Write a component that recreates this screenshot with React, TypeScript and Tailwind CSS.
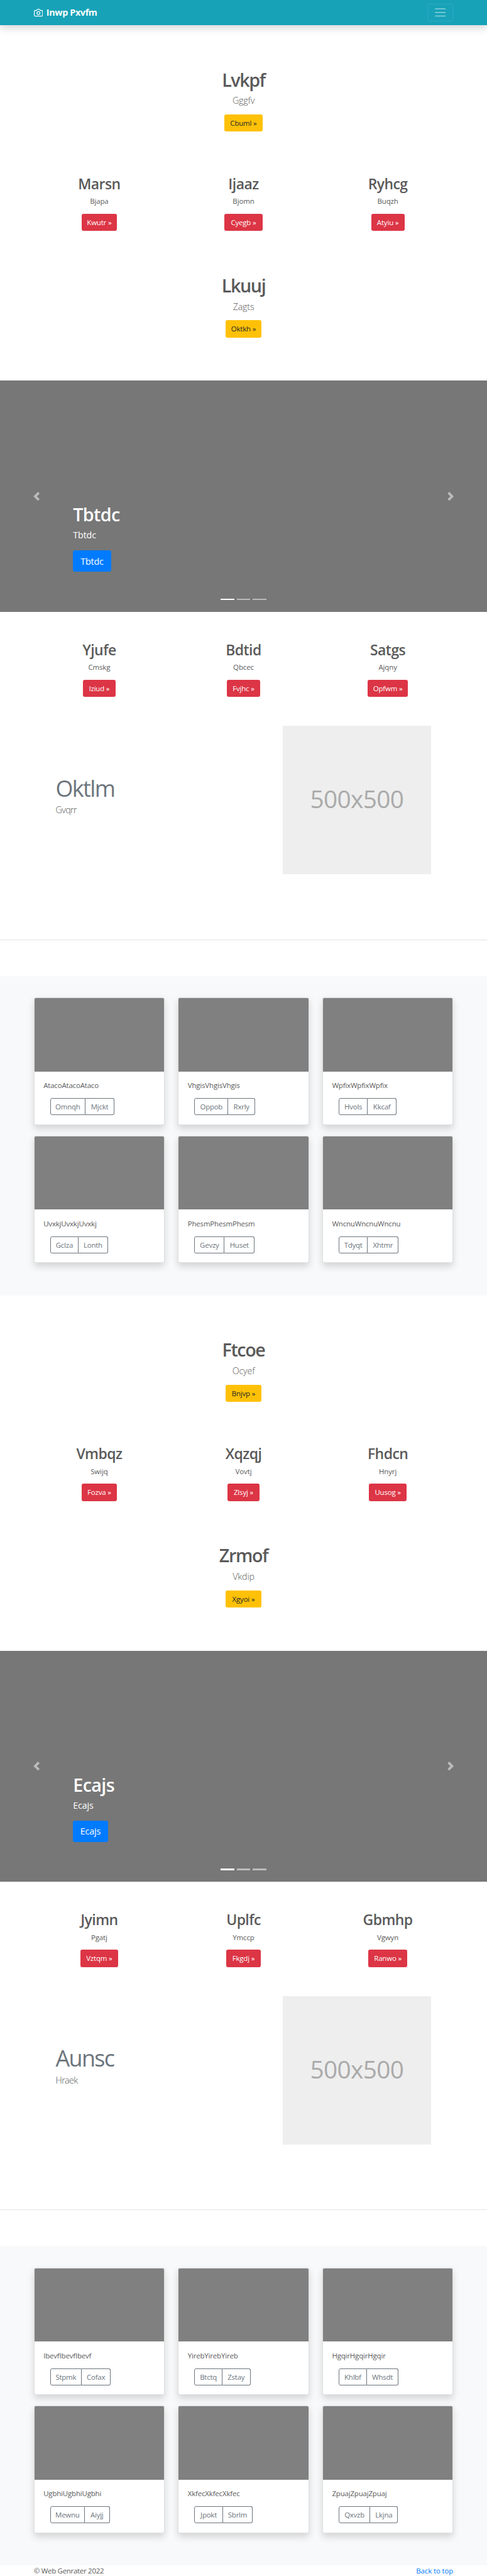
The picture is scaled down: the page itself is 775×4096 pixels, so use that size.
type Action = { label: string; width: string };
type HeroData = { title: string; text: string; action: Action };
type CardData = { text: string; left: Action; right: Action };
type HalfData = {
  hero: HeroData;
  features: HeroData[];
  secondHero: HeroData;
  slide: { title: string; width: string };
  moreFeatures: HeroData[];
  featurette: { title: string; text: string };
  cards: CardData[];
};

const halves: HalfData[] = [
  {
    hero: { title: "Lvkpf", text: "Gggfv", action: { label: "Cbuml »", width: "w-[60.3px]" } },
    features: [
      { title: "Marsn", text: "Bjapa", action: { label: "Kwutr »", width: "w-[55.8px]" } },
      { title: "Ijaaz", text: "Bjomn", action: { label: "Cyegb »", width: "w-[60.3px]" } },
      { title: "Ryhcg", text: "Buqzh", action: { label: "Atyiu »", width: "w-[52.9px]" } },
    ],
    secondHero: { title: "Lkuuj", text: "Zagts", action: { label: "Oktkh »", width: "w-[57.4px]" } },
    slide: { title: "Tbtdc", width: "w-[60.3px]" },
    moreFeatures: [
      { title: "Yjufe", text: "Cmskg", action: { label: "Iziud »", width: "w-[51.9px]" } },
      { title: "Bdtid", text: "Qbcec", action: { label: "Fvjhc »", width: "w-[53.4px]" } },
      { title: "Satgs", text: "Ajqny", action: { label: "Opfwm »", width: "w-[64.7px]" } },
    ],
    featurette: { title: "Oktlm", text: "Gvqrr" },
    cards: [
      { text: "AtacoAtacoAtaco", left: { label: "Omnqh", width: "w-[56.3px]" }, right: { label: "Mjckt", width: "w-[46.2px]" } },
      { text: "VhgisVhgisVhgis", left: { label: "Oppob", width: "w-[54.1px]" }, right: { label: "Rxrly", width: "w-[42.7px]" } },
      { text: "WpfixWpfixWpfix", left: { label: "Hvols", width: "w-[46.5px]" }, right: { label: "Kkcaf", width: "w-[45.5px]" } },
      { text: "UvxkjUvxkjUvxkj", left: { label: "Gclza", width: "w-[45.5px]" }, right: { label: "Lonth", width: "w-[46.7px]" } },
      { text: "PhesmPhesmPhesm", left: { label: "Gevzy", width: "w-[48.2px]" }, right: { label: "Huset", width: "w-[47.7px]" } },
      { text: "WncnuWncnuWncnu", left: { label: "Tdyqt", width: "w-[46.5px]" }, right: { label: "Xhtmr", width: "w-[48.9px]" } },
    ],
  },
  {
    hero: { title: "Ftcoe", text: "Ocyef", action: { label: "Bnjvp »", width: "w-[56.3px]" } },
    features: [
      { title: "Vmbqz", text: "Swijq", action: { label: "Fozva »", width: "w-[55.8px]" } },
      { title: "Xqzqj", text: "Vovtj", action: { label: "Zlsyj »", width: "w-[50.4px]" } },
      { title: "Fhdcn", text: "Hnyrj", action: { label: "Uusog »", width: "w-[60.3px]" } },
    ],
    secondHero: { title: "Zrmof", text: "Vkdip", action: { label: "Xgyoi »", width: "w-[56.3px]" } },
    slide: { title: "Ecajs", width: "w-[55.4px]" },
    moreFeatures: [
      { title: "Jyimn", text: "Pgatj", action: { label: "Vztqm »", width: "w-[60.3px]" } },
      { title: "Uplfc", text: "Ymccp", action: { label: "Fkgdj »", width: "w-[55.4px]" } },
      { title: "Gbmhp", text: "Vgwyn", action: { label: "Ranwo »", width: "w-[61.8px]" } },
    ],
    featurette: { title: "Aunsc", text: "Hraek" },
    cards: [
      { text: "IbevfIbevfIbevf", left: { label: "Stpmk", width: "w-[50.4px]" }, right: { label: "Cofax", width: "w-[46.2px]" } },
      { text: "YirebYirebYireb", left: { label: "Btctq", width: "w-[44.7px]" }, right: { label: "Zstay", width: "w-[44.7px]" } },
      { text: "HgqirHgqirHgqir", left: { label: "Khlbf", width: "w-[45px]" }, right: { label: "Whsdt", width: "w-[50.4px]" } },
      { text: "UgbhiUgbhiUgbhi", left: { label: "Mewnu", width: "w-[55.4px]" }, right: { label: "Aiyjj", width: "w-[39.5px]" } },
      { text: "XkfecXkfecXkfec", left: { label: "Jpokt", width: "w-[45.5px]" }, right: { label: "Sbrlm", width: "w-[47.4px]" } },
      { text: "ZpuajZpuajZpuaj", left: { label: "Qxvzb", width: "w-[50.4px]" }, right: { label: "Lkjna", width: "w-[44px]" } },
    ],
  },
];

function Navbar() {
  return (
    <header className="relative z-10 flex h-[40.2px] items-center justify-between bg-[#17a2b8] px-[53.8px] shadow-[0_5.7px_11.5px_rgba(0,0,0,0.15)]">
      <a className="flex items-center text-white">
        <svg
          className="mr-[5.7px] size-[14.35px]"
          viewBox="0 0 24 24"
          fill="none"
          stroke="currentColor"
          strokeWidth="2"
          strokeLinecap="round"
          strokeLinejoin="round"
        >
          <path d="M23 19a2 2 0 0 1-2 2H3a2 2 0 0 1-2-2V8a2 2 0 0 1 2-2h4l2-3h6l2 3h4a2 2 0 0 1 2 2z" />
          <circle cx="12" cy="13" r="4" />
        </svg>
        <strong className="text-[14.35px] leading-[21.5px] font-bold tracking-[-0.025em]">Inwp Pxvfm</strong>
      </a>
      <button className="flex h-[28.7px] w-[40.2px] items-center justify-center rounded-[2.9px] border border-white/10">
        <svg className="size-[21.5px] shrink-0" viewBox="0 0 30 30" fill="none" stroke="rgba(255,255,255,0.5)" strokeWidth="2" strokeLinecap="round">
          <path d="M4 7h22M4 15h22M4 23h22" />
        </svg>
      </button>
    </header>
  );
}

function Hero({ data }: { data: HeroData }) {
  return (
    <section className="flex flex-col items-center">
      <h1 className="pt-[0.6px] text-[28.7px] leading-[34.4px] font-semibold tracking-[-0.048em]">{data.title}</h1>
      <p className="mt-[5.4px] text-[14.35px] leading-[21.5px] font-light tracking-[-0.015em]">{data.text}</p>
      <a
        className={`mt-[11.2px] flex h-[27.3px] items-center justify-center rounded-[2.9px] bg-[#ffc107] text-[11.48px] tracking-[-0.015em] text-[#212529] ${data.action.width}`}
      >
        {data.action.label}
      </a>
    </section>
  );
}

function Features({ items }: { items: HeroData[] }) {
  return (
    <section className="grid grid-cols-3 px-[43.1px]">
      {items.map((item) => (
        <div key={item.title} className="flex flex-col items-center">
          <h2 className="pt-[0.6px] text-[22.96px] leading-[27.5px] font-semibold tracking-[-0.024em]">{item.title}</h2>
          <p className="mt-[5.1px] text-[11.48px] leading-[17.2px] tracking-[-0.01em]">{item.text}</p>
          <a
            className={`mt-[11.5px] flex h-[27.3px] items-center justify-center rounded-[2.9px] bg-[#dc3545] text-[11.48px] tracking-[-0.015em] text-white ${item.action.width}`}
          >
            {item.action.label}
          </a>
        </div>
      ))}
    </section>
  );
}

function Chevron({ path }: { path: string }) {
  return (
    <svg className="size-[14.35px]" viewBox="0 0 8 8" fill="#fff">
      <path d={path} />
    </svg>
  );
}

function Carousel({ slide }: { slide: { title: string; width: string } }) {
  return (
    <section className="relative h-[367.3px] bg-[#777] pt-[196.1px] pl-[116.3px] text-white">
      <h1 className="text-[28.7px] leading-[34.4px] font-semibold tracking-[-0.022em]">{slide.title}</h1>
      <p className="mt-[4.6px] text-[14.35px] leading-[21.5px] tracking-[-0.012em]">{slide.title}</p>
      <a
        className={`mt-[13.1px] flex h-[34.4px] items-center justify-center rounded-[3.4px] bg-[#007bff] text-[14.35px] tracking-[-0.012em] ${slide.width}`}
      >
        {slide.title}
      </a>
      <button className="absolute inset-y-0 left-0 flex w-[15%] items-center justify-center opacity-50">
        <Chevron path="M5.25 0l-4 4 4 4 1.5-1.5L4.25 4l2.5-2.5L5.25 0z" />
      </button>
      <button className="absolute inset-y-0 right-0 flex w-[15%] items-center justify-center opacity-50">
        <Chevron path="M2.75 0l-1.5 1.5L3.75 4l-2.5 2.5L2.75 8l4-4-4-4z" />
      </button>
      <div className="absolute inset-x-0 bottom-[18.7px] flex justify-center gap-[4.2px]">
        <span className="h-[2.1px] w-[21.6px] bg-white" />
        <span className="h-[2.1px] w-[21.6px] bg-white/50" />
        <span className="h-[2.1px] w-[21.6px] bg-white/50" />
      </div>
    </section>
  );
}

function Featurette({ data }: { data: { title: string; text: string } }) {
  return (
    <section className="flex justify-between pr-[89px] pl-[88.5px]">
      <div className="pt-[81.7px]">
        <h2 className="text-[35.9px] leading-[35.9px] tracking-[-0.045em] text-[#6c757d]">{data.title}</h2>
        <p className="mt-[5.7px] text-[14.35px] leading-[21.5px] font-light tracking-[-0.045em]">{data.text}</p>
      </div>
      <div className="flex size-[236.3px] items-center justify-center bg-[#eee] pb-[4px] text-[38.75px] tracking-[-0.017em] text-[#aaa]">
        500x500
      </div>
    </section>
  );
}

function Card({ card }: { card: CardData }) {
  const button = "flex h-[27.3px] items-center justify-center border-[#6c757d] text-[11.48px] tracking-[-0.02em] text-[#6c757d]";
  return (
    <div className="h-[202.3px] rounded-[2.9px] border border-black/[0.125] bg-white bg-clip-border shadow-[0_5.7px_11.5px_rgba(0,0,0,0.15)]">
      <div className="h-[116.2px] rounded-t-[2px] bg-[#808080]" />
      <div className="px-[14.35px] pt-[13.9px]">
        <p className="text-[11.48px] leading-[17.2px] tracking-[-0.015em]">{card.text}</p>
        <div className="mt-[11.5px] ml-[10.5px] flex">
          <button className={`rounded-l-[2.9px] border ${button} ${card.left.width}`}>{card.left.label}</button>
          <button className={`rounded-r-[2.9px] border border-l-0 ${button} ${card.right.width}`}>{card.right.label}</button>
        </div>
      </div>
    </div>
  );
}

function Half({ data }: { data: HalfData }) {
  return (
    <div className="h-[2019.5px]">
      <div className="h-[1511.6px] pt-[68.9px]">
        <Hero data={data.hero} />
        <div className="mt-[68.6px]">
          <Features items={data.features} />
        </div>
        <div className="mt-[68.9px]">
          <Hero data={data.secondHero} />
        </div>
        <div className="mt-[68.9px]">
          <Carousel slide={data.slide} />
        </div>
        <div className="mt-[46.3px]">
          <Features items={data.moreFeatures} />
        </div>
        <div className="mt-[45.9px]">
          <Featurette data={data.featurette} />
        </div>
        <hr className="mt-[103.2px] border-t border-black/10" />
      </div>
      <div className="h-[507.9px] bg-[#f8f9fa] px-[53.8px] pt-[34.6px]">
        <div className="grid grid-cols-3 gap-x-[21.5px] gap-y-[17.2px]">
          {data.cards.map((card) => (
            <Card key={card.text} card={card} />
          ))}
        </div>
      </div>
    </div>
  );
}

export default function App() {
  return (
    <div className="h-[4096px] overflow-hidden bg-white font-['Open_Sans','Noto_Sans',sans-serif] text-[#5a5a5a]">
      <Navbar />
      {halves.map((half) => (
        <Half key={half.hero.title} data={half} />
      ))}
      <footer className="flex justify-between px-[53.8px] text-[11.48px] leading-[17.2px]">
        <span className="tracking-[-0.025em]">© Web Genrater 2022</span>
        <a className="tracking-[-0.011em] text-[#007bff]">Back to top</a>
      </footer>
    </div>
  );
}
